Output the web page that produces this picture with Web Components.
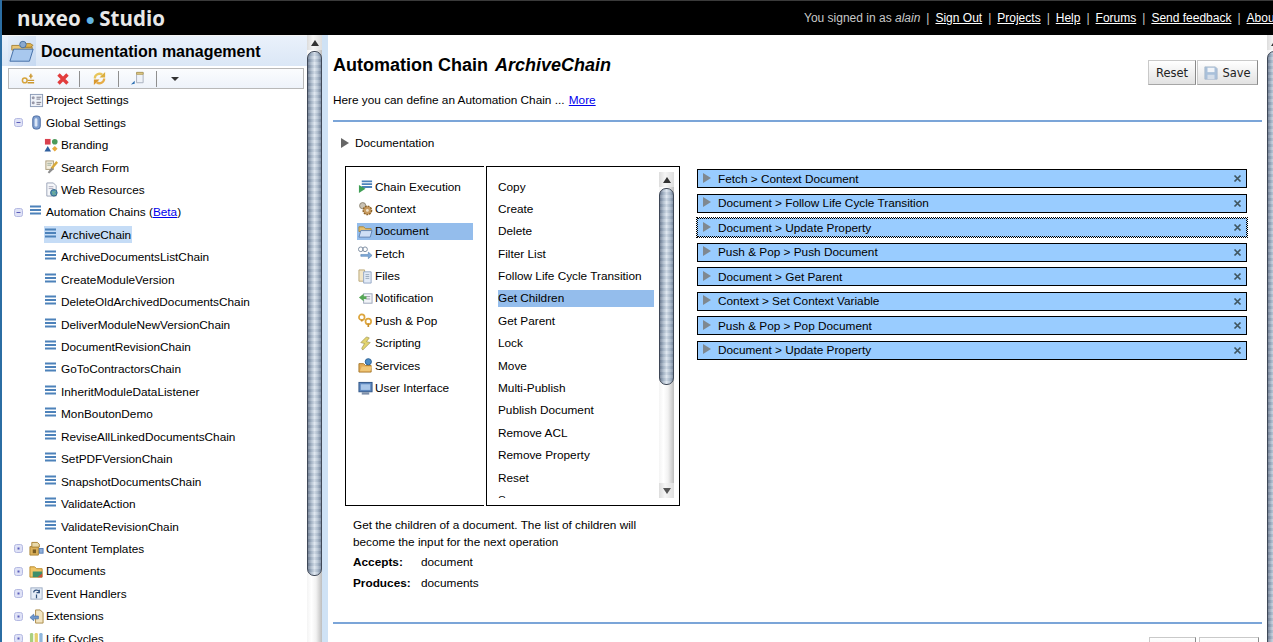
<!DOCTYPE html>
<html>
<head>
<meta charset="utf-8">
<title>Nuxeo Studio</title>
<style>
  html, body { margin: 0; height: 642px; overflow: hidden; background: #fff; }
  body { font: 11.8px "Liberation Sans", Arial, sans-serif; color: #000; }
  a { color: #0000ee; }
</style>
</head>
<body>
<studio-app>
  <studio-topbar slot="top"></studio-topbar>
  <studio-sidebar slot="side">
    <tree-row icon="settings">Project Settings</tree-row>
    <tree-row icon="cylinder" toggle="minus">Global Settings</tree-row>
    <tree-row level="1" icon="shapes">Branding</tree-row>
    <tree-row level="1" icon="search">Search Form</tree-row>
    <tree-row level="1" icon="webres">Web Resources</tree-row>
    <tree-row icon="lines" toggle="minus">Automation Chains (<a href="#">Beta</a>)</tree-row>
    <tree-row level="1" icon="lines" selected>ArchiveChain</tree-row>
    <tree-row level="1" icon="lines">ArchiveDocumentsListChain</tree-row>
    <tree-row level="1" icon="lines">CreateModuleVersion</tree-row>
    <tree-row level="1" icon="lines">DeleteOldArchivedDocumentsChain</tree-row>
    <tree-row level="1" icon="lines">DeliverModuleNewVersionChain</tree-row>
    <tree-row level="1" icon="lines">DocumentRevisionChain</tree-row>
    <tree-row level="1" icon="lines">GoToContractorsChain</tree-row>
    <tree-row level="1" icon="lines">InheritModuleDataListener</tree-row>
    <tree-row level="1" icon="lines">MonBoutonDemo</tree-row>
    <tree-row level="1" icon="lines">ReviseAllLinkedDocumentsChain</tree-row>
    <tree-row level="1" icon="lines">SetPDFVersionChain</tree-row>
    <tree-row level="1" icon="lines">SnapshotDocumentsChain</tree-row>
    <tree-row level="1" icon="lines">ValidateAction</tree-row>
    <tree-row level="1" icon="lines">ValidateRevisionChain</tree-row>
    <tree-row icon="templates" toggle="plus">Content Templates</tree-row>
    <tree-row icon="documents" toggle="plus">Documents</tree-row>
    <tree-row icon="events" toggle="plus">Event Handlers</tree-row>
    <tree-row icon="extensions" toggle="plus">Extensions</tree-row>
    <tree-row icon="cycles" toggle="plus">Life Cycles</tree-row>
  </studio-sidebar>
  <chain-editor slot="main">
    <palette-item slot="categories" icon="execution">Chain Execution</palette-item>
    <palette-item slot="categories" icon="gears">Context</palette-item>
    <palette-item slot="categories" icon="folder" selected>Document</palette-item>
    <palette-item slot="categories" icon="fetch">Fetch</palette-item>
    <palette-item slot="categories" icon="files">Files</palette-item>
    <palette-item slot="categories" icon="notify">Notification</palette-item>
    <palette-item slot="categories" icon="pushpop">Push &amp; Pop</palette-item>
    <palette-item slot="categories" icon="script">Scripting</palette-item>
    <palette-item slot="categories" icon="services">Services</palette-item>
    <palette-item slot="categories" icon="monitor">User Interface</palette-item>

    <palette-item slot="operations">Copy</palette-item>
    <palette-item slot="operations">Create</palette-item>
    <palette-item slot="operations">Delete</palette-item>
    <palette-item slot="operations">Filter List</palette-item>
    <palette-item slot="operations">Follow Life Cycle Transition</palette-item>
    <palette-item slot="operations" selected>Get Children</palette-item>
    <palette-item slot="operations">Get Parent</palette-item>
    <palette-item slot="operations">Lock</palette-item>
    <palette-item slot="operations">Move</palette-item>
    <palette-item slot="operations">Multi-Publish</palette-item>
    <palette-item slot="operations">Publish Document</palette-item>
    <palette-item slot="operations">Remove ACL</palette-item>
    <palette-item slot="operations">Remove Property</palette-item>
    <palette-item slot="operations">Reset</palette-item>
    <palette-item slot="operations">Save</palette-item>

    <chain-step slot="steps">Fetch &gt; Context Document</chain-step>
    <chain-step slot="steps">Document &gt; Follow Life Cycle Transition</chain-step>
    <chain-step slot="steps" focused>Document &gt; Update Property</chain-step>
    <chain-step slot="steps">Push &amp; Pop &gt; Push Document</chain-step>
    <chain-step slot="steps">Document &gt; Get Parent</chain-step>
    <chain-step slot="steps">Context &gt; Set Context Variable</chain-step>
    <chain-step slot="steps">Push &amp; Pop &gt; Pop Document</chain-step>
    <chain-step slot="steps">Document &gt; Update Property</chain-step>
  </chain-editor>
</studio-app>

<script>
const ICONS = {
  settings: '<rect x="1.5" y="1.5" width="13" height="13" fill="#eef2f8" stroke="#8a9ab5"/><circle cx="4.5" cy="5" r="1.6" fill="#99a"/><circle cx="4.5" cy="10.5" r="1.6" fill="#99a"/><path d="M8 4.5h5M8 6.5h4M8 10h5M8 12h4" stroke="#778" fill="none"/>',
  cylinder: '<rect x="4" y="1" width="8" height="14" rx="3" fill="#7f9fd0" stroke="#47699f"/><rect x="6" y="3.5" width="3" height="9" rx="1.5" fill="#dbe6f6"/>',
  shapes: '<rect x="1" y="1" width="6" height="6" fill="#d9414e"/><circle cx="11.5" cy="4" r="3" fill="#4c9a5a"/><path d="M4 8.5l3.5 6h-7z" fill="#2f5f9f"/><path d="M11.5 8.5l3 3-3 3-3-3z" fill="#e8a93c"/>',
  search: '<rect x="2" y="1" width="8" height="9" fill="#f5efe0" stroke="#a89a78"/><path d="M3.5 3.5h5M3.5 5.5h4" stroke="#9a9"/><path d="M14 2L8 9" stroke="#d8a93a" stroke-width="2.5"/><path d="M8 8l-4 5 1.5 1.5L10 10z" fill="#8d8d8d"/>',
  webres: '<path d="M3 1h7l3 3v11H3z" fill="#f6f7fa" stroke="#9aa4b8"/><path d="M5 5h5M5 7h5" stroke="#aab"/><circle cx="10.5" cy="11.5" r="3.5" fill="#4d90b8" stroke="#2e6285"/><path d="M8.500 10.500c2 1 3 0 4-1M9 13c1.500-.5 3-.5 4 .5" stroke="#8fc87a" fill="none"/>',
  lines: '<path d="M1 1.500h11M1 5h11M1 8.500h11" stroke="#4d82ba" stroke-width="2" fill="none"/>',
  templates: '<path d="M1 6h9v9H1z" fill="#dcb25c" stroke="#a98233"/><path d="M3 1.500h6l2 2v3H3z" fill="#e9d9a9" stroke="#a98233"/><rect x="11" y="8" width="4" height="5" fill="#8fb0dc" stroke="#5a7fb5"/><rect x="4" y="9" width="3.500" height="4" fill="#7a5c22"/>',
  documents: '<path d="M1 3h5l2 2h6v9H1z" fill="#f1c667" stroke="#b98a2c"/><rect x="4" y="8" width="10" height="6" fill="#3e8f6a"/><path d="M9 14l5-4v4z" fill="#d24d3a"/>',
  events: '<rect x="2" y="2" width="12" height="12" fill="#e6edf7" stroke="#9aaac2"/><path d="M5 7c0-3 5-3.500 6-.5M11 4v3H8M8 9v4" stroke="#33527d" stroke-width="1.300" fill="none"/>',
  extensions: '<path d="M7 1h5l3 3v11H7z" fill="#f2e4c1" stroke="#a98a48"/><path d="M1 9l4-3.500v2h5v3H5v2z" fill="#6f97cc" stroke="#416da6" stroke-width=".7"/>',
  cycles: '<rect x="1" y="2" width="3.500" height="11" rx="1.500" fill="#a9cf7f"/><rect x="6" y="2" width="3.500" height="11" rx="1.500" fill="#e6cf6c"/><rect x="11" y="2" width="3.500" height="11" rx="1.500" fill="#8fb6dc"/>',
  execution: '<path d="M4 2.500h11M4 5.500h11M4 8.500h11" stroke="#4d82ba" stroke-width="2" fill="none"/><path d="M1 6.500l7 4-7 4.500z" fill="#3f9f55"/>',
  gears: '<circle cx="5" cy="5" r="3.300" fill="#c9c2b4" stroke="#8c8372"/><circle cx="10" cy="10" r="4.500" fill="#c89a5f" stroke="#8c6328" stroke-width="1.500" stroke-dasharray="2 1"/><circle cx="10" cy="10" r="1.500" fill="#f1e3c8"/>',
  folder: '<path d="M1 3h5l2 2h6v3H1z" fill="#e6c070" stroke="#a8853a"/><path d="M1 14l2-7h12l-2 7z" fill="#cfdff5" stroke="#5f82b2"/>',
  fetch: '<circle cx="3" cy="3.500" r="2.500" fill="none" stroke="#7a8a9f"/><circle cx="7.500" cy="3.500" r="2.500" fill="none" stroke="#7a8a9f"/><path d="M3 9h8V6.500l4 3.500-4 3.500V11H3z" fill="#7fa9d8" stroke="#4f7cae" stroke-width=".6"/>',
  files: '<path d="M1 1h6v12H1z" fill="#f2e6c8" stroke="#b9a675"/><path d="M6 3h8v12H6z" fill="#e3ebf7" stroke="#93a6c4"/><path d="M8 6h4M8 8h4M8 10h4" stroke="#9ab"/>',
  notify: '<rect x="6" y="3" width="9" height="10" fill="#f2f4f8" stroke="#9aa4b8"/><path d="M8 6h5M8 8.500h5" stroke="#99a"/><path d="M1 7l5-4v2.500h3v3H6V11z" fill="#55a755"/>',
  pushpop: '<circle cx="4" cy="4.500" r="3" fill="none" stroke="#dda53c" stroke-width="1.800"/><circle cx="11" cy="9" r="3" fill="none" stroke="#dda53c" stroke-width="1.800"/><path d="M11 11v4M4 7v2" stroke="#c78d2a" stroke-width="1.800"/>',
  script: '<path d="M9 1L3 7l4 1-3 5 1 2 8-8-4-1 3-4z" fill="#e3d46d" stroke="#a39a59" stroke-width=".8"/>',
  services: '<path d="M1 6h5l2 2h6v7H1z" fill="#e3aa55" stroke="#a67a2d"/><circle cx="11" cy="4" r="3.300" fill="#4d8cc4" stroke="#2a5f92"/><path d="M2 14l2-5h11l-2 5z" fill="#f0c777"/>',
  monitor: '<rect x="1" y="1.500" width="14" height="10" fill="#5e88bf" stroke="#2e5486"/><rect x="3" y="3.500" width="10" height="6" fill="#a9c6e8"/><rect x="4" y="12" width="8" height="2.500" fill="#7d8ea8"/>',
  openfolder: '<path d="M3 8h8l2 2h12v3H3z" fill="#e9c678" stroke="#a88335"/><path d="M1 25l4-13h21l-4 13z" fill="#a8c8ee" stroke="#3f6aa3"/><path d="M15 6h8l3 2-3 2h-8z" fill="#e0b24c" stroke="#a88335"/><circle cx="15" cy="7" r="3.500" fill="#8aa9cf" stroke="#48709f"/>',
  linkadd: '<circle cx="4" cy="10" r="2.500" fill="none" stroke="#d6a43c" stroke-width="1.600"/><path d="M7 10h7M7 12.500h7M10.500 3v5M8.500 5.500h4" stroke="#cc982f" stroke-width="1.500"/>',
  redx: '<path d="M2.500 2.500l9 9M11.500 2.500l-9 9" stroke="#e23d3d" stroke-width="3.400"/>',
  refresh: '<path d="M3 8a5 5 0 0 1 8-4" stroke="#e8c65c" stroke-width="2.400" fill="none"/><path d="M14 1v6H8z" fill="#dcae3e"/><path d="M13 8a5 5 0 0 1-8 4" stroke="#e6ad48" stroke-width="2.400" fill="none"/><path d="M2 15V9h6z" fill="#d9982f"/>',
  page: '<path d="M7 1.500h7v11H7z" fill="#eef2f8" stroke="#a7afbd"/><path d="M7 1.500h7v2H7z" fill="#e4cf8c" stroke="#b39d5c"/><path d="M1 14.500l4-1v-3z" fill="#2c6fb3"/>',
  save: '<path d="M1 1h12l2 2v12H1z" fill="#a9c0da" stroke="#a8b9cd"/><rect x="4" y="2" width="8" height="5" fill="#f1f4f8"/><rect x="4" y="10" width="8" height="5" fill="#d5dee9"/>'
};

function iconSvg(name, size) {
  const box = name === 'openfolder' ? 28 : name === 'lines' ? 14 : name === 'redx' ? 14 : 16;
  return `<svg width="${size}" height="${size}" viewBox="0 0 ${box} ${box}" style="display:block;flex:none">${ICONS[name] || ''}</svg>`;
}

class StudioApp extends HTMLElement {
  constructor() {
    super();
    this.attachShadow({ mode: 'open' });
    this.shadowRoot.innerHTML = `
      <style>
        :host {
          display: flex;
          flex-direction: column;
          height: 642px;
          border-left: 2px solid #2b6da3;
          box-sizing: border-box;
          overflow: hidden;
        }
        .body { flex: 1; display: flex; min-height: 0; }
        .strip { width: 6px; flex: none; background: #cfe2f5; }
      </style>
      <slot name="top"></slot>
      <div class="body">
        <slot name="side"></slot>
        <aqua-scrollbar open-end></aqua-scrollbar>
        <div class="strip"></div>
        <slot name="main"></slot>
      </div>
    `;
  }
}

class StudioTopbar extends HTMLElement {
  constructor() {
    super();
    this.attachShadow({ mode: 'open' });
    this.shadowRoot.innerHTML = `
      <style>
        :host {
          display: flex;
          align-items: center;
          flex: none;
          height: 35px;
          box-sizing: border-box;
          border-top: 1px solid #3a3a3a;
          background: #000;
          color: #c8c8c8;
          overflow: hidden;
          white-space: nowrap;
        }
        .logo {
          flex: none;
          width: 802px;
          box-sizing: border-box;
          padding-left: 15px;
          font: 700 20.5px "Open Sans", sans-serif;
          color: #e8e8e8;
        }
        .logo i { color: #62b4e2; font-style: normal; font-size: 16px; margin: 0 4px 0 5px; vertical-align: 1px; }
        .links { flex: none; display: flex; gap: 6px; font-size: 12px; }
        a { color: #fff; }
      </style>
      <div class="logo">nuxeo<i>&#9679;</i>Studio</div>
      <div class="links">
        <span>You signed in as <em>alain</em></span><span>|</span>
        <a href="#">Sign Out</a><span>|</span>
        <a href="#">Projects</a><span>|</span>
        <a href="#">Help</a><span>|</span>
        <a href="#">Forums</a><span>|</span>
        <a href="#">Send feedback</a><span>|</span>
        <a href="#">About</a>
      </div>
    `;
  }
}

class StudioSidebar extends HTMLElement {
  constructor() {
    super();
    this.attachShadow({ mode: 'open' });
    this.shadowRoot.innerHTML = `
      <style>
        :host {
          display: flex;
          flex-direction: column;
          flex: none;
          width: 305px;
          min-height: 0;
          background: #fff;
          overflow: hidden;
        }
        .head {
          flex: none;
          height: 31px;
          display: flex;
          align-items: stretch;
          box-sizing: border-box;
          border-top: 1px solid #f4f4f4;
          background: linear-gradient(#eaf1fb, #dbe7f6);
        }
        .glyph {
          width: 28px;
          margin-left: 6px;
          display: flex;
          align-items: center;
          justify-content: center;
          background: linear-gradient(135deg, #e4edf9, #c6d9f1);
        }
        h1 { margin: 0 0 0 5px; font-size: 16px; line-height: 31px; font-weight: bold; color: #000; }
        .tools {
          flex: none;
          height: 21px;
          margin: 2px 3px 0 6px;
          box-sizing: border-box;
          border: 1px solid #b9b9b9;
          display: flex;
          align-items: center;
          background: linear-gradient(#fbfcfe, #eef3fa);
        }
        .tool { flex: none; display: flex; justify-content: center; align-items: center; }
        .sep { flex: none; width: 1px; height: 16px; background: #8f8f8f; }
        .caret { width: 0; height: 0; border: 4px solid transparent; border-top: 4px solid #333; border-bottom: 0; margin: 1px auto 0; }
        .tree { flex: 1; min-height: 0; overflow: hidden; }
      </style>
      <div class="head">
        <div class="glyph">${iconSvg('openfolder', 26)}</div>
        <h1>Documentation management</h1>
      </div>
      <div class="tools">
        <span class="tool" style="width:38px">${iconSvg('linkadd', 15)}</span>
        <span class="tool" style="width:32px">${iconSvg('redx', 14)}</span>
        <span class="sep"></span>
        <span class="tool" style="width:38px">${iconSvg('refresh', 15)}</span>
        <span class="sep"></span>
        <span class="tool" style="width:37px">${iconSvg('page', 15)}</span>
        <span class="sep"></span>
        <span class="tool" style="width:35px"><span class="caret"></span></span>
      </div>
      <div class="tree"><slot></slot></div>
    `;
  }
}

class TreeRow extends HTMLElement {
  connectedCallback() {
    if (this.shadowRoot) return;
    this.attachShadow({ mode: 'open' });
    const level = this.getAttribute('level') === '1' ? 1 : 0;
    const toggle = this.getAttribute('toggle');
    const mark = toggle === 'minus' ? '<path d="M2.500 4.500h4" stroke="#5a5cb8"/>'
      : toggle === 'plus' ? '<rect x="3.500" y="3.500" width="2" height="2" fill="#5a5cb8"/>' : '';
    this.shadowRoot.innerHTML = `
      <style>
        :host {
          display: flex;
          align-items: center;
          height: 22.450px;
          padding-left: ${level ? 42 : 12}px;
          white-space: nowrap;
        }
        .toggle { flex: none; width: 15px; height: 9px; }
        .inner { display: flex; align-items: center; height: 17px; }
        :host([selected]) .inner { background: #c5dcf6; padding-right: 1px; }
        .icon { flex: none; width: 17px; }
      </style>
      ${level ? '' : `<svg class="toggle" viewBox="0 0 15 9"><rect x=".5" y=".5" width="8" height="8" rx="2" fill="${toggle ? '#dfe2f6' : 'none'}" stroke="${toggle ? '#b4b9e2' : 'none'}"/>${mark}</svg>`}
      <div class="inner">
        <span class="icon">${iconSvg(this.getAttribute('icon'), this.getAttribute('icon') === 'lines' ? 14 : 15)}</span>
        <span><slot></slot></span>
      </div>
    `;
  }
}

class AquaScrollbar extends HTMLElement {
  connectedCallback() {
    if (this.shadowRoot) return;
    this.attachShadow({ mode: 'open' });
    const open = this.hasAttribute('open-end');
    const h = this.getAttribute('thumb-height');
    this.shadowRoot.innerHTML = `
      <style>
        :host {
          display: flex;
          flex-direction: column;
          flex: none;
          width: 15px;
          background: linear-gradient(90deg, #f4f4f4, #ffffff 30%, #f2f2f2 60%, #bdbdbd);
          overflow: hidden;
        }
        .arrow {
          flex: none;
          height: 15px;
          display: flex;
          align-items: center;
          justify-content: center;
          background: linear-gradient(90deg, #dcdcdc, #f6f6f6 40%, #dedede);
        }
        .up { width: 0; height: 0; border: 4px solid transparent; border-top: 0; border-bottom: 6px solid #333; }
        .down { width: 0; height: 0; border: 4px solid transparent; border-bottom: 0; border-top: 6px solid #555; }
        .thumb {
          flex: none;
          box-sizing: border-box;
          height: ${h || 525}px;
          margin-top: 1px;
          border-radius: 7px;
          border: 1px solid #3f4857;
          background:
            repeating-linear-gradient(0deg, rgba(255,255,255,.12) 0 3px, rgba(90,110,135,.1) 3px 6px),
            linear-gradient(90deg, #6f7d92, #a9b8c9 25%, #dbe4ee 50%, #b3c1d1 75%, #7a8aa0);
        }
        .rest { flex: 1; }
      </style>
      <div class="arrow"><span class="up"></span></div>
      <div class="thumb"></div>
      <div class="rest"></div>
      ${open ? '' : '<div class="arrow"><span class="down"></span></div>'}
    `;
  }
}

class PaletteItem extends HTMLElement {
  connectedCallback() {
    if (this.shadowRoot) return;
    this.attachShadow({ mode: 'open' });
    const icon = this.getAttribute('icon');
    this.shadowRoot.innerHTML = `
      <style>
        :host { display: block; height: 22.400px; white-space: nowrap; }
        .inner { display: flex; align-items: center; height: 17px; position: relative; top: 2px; }
        :host([selected]) .inner { background: #94bdec; }
        .icon { flex: none; width: 18px; padding-left: 1px; box-sizing: border-box; }
      </style>
      <div class="inner">
        ${icon ? `<span class="icon">${iconSvg(icon, 15)}</span>` : ''}
        <span><slot></slot></span>
      </div>
    `;
  }
}

class ChainStep extends HTMLElement {
  connectedCallback() {
    if (this.shadowRoot) return;
    this.attachShadow({ mode: 'open' });
    this.shadowRoot.innerHTML = `
      <style>
        :host {
          display: flex;
          align-items: center;
          height: 19px;
          box-sizing: border-box;
          border: 1px solid #000;
          background: #99ccff;
          padding: 0 4px 0 5px;
          margin-bottom: 5.500px;
        }
        :host([focused]) { border-style: dotted; outline: 1px dotted #000; }
        .tri { flex: none; width: 0; height: 0; border-left: 8px solid #7f8890; border-top: 5px solid transparent; border-bottom: 5px solid transparent; margin: -2px 7px 0 0; }
        .text { flex: 1; white-space: nowrap; }
        svg { flex: none; }
      </style>
      <span class="tri"></span>
      <span class="text"><slot></slot></span>
      <svg width="9" height="9" viewBox="0 0 9 9"><path d="M1.500 1.500l6 6M7.500 1.500l-6 6" stroke="#3f5560" stroke-width="1.700"/></svg>
    `;
  }
}

class FormButton extends HTMLElement {
  connectedCallback() {
    if (this.shadowRoot) return;
    this.attachShadow({ mode: 'open' });
    const icon = this.getAttribute('icon');
    this.shadowRoot.innerHTML = `
      <style>
        :host {
          display: inline-flex;
          align-items: center;
          justify-content: center;
          gap: 4px;
          height: 25px;
          box-sizing: border-box;
          border: 1px solid #c9c9c9;
          border-right-color: #8a8a8a;
          border-bottom-color: #a6a6a6;
          background: linear-gradient(#ffffff, #e2e2e2);
          font: 11.5px "DejaVu Sans", sans-serif;
          color: #222;
        }
      </style>
      ${icon ? iconSvg(icon, 14) : ''}<slot></slot>
    `;
  }
}

class ChainEditor extends HTMLElement {
  constructor() {
    super();
    this.attachShadow({ mode: 'open' });
    this.shadowRoot.innerHTML = `
      <style>
        :host { flex: 1; min-width: 0; display: flex; background: #fff; overflow: hidden; }
        .page { flex: 1; min-width: 0; padding: 0 5px 0 5px; }
        .clip { flex: none; width: 6px; overflow: hidden; display: flex; }
        .head { display: flex; justify-content: space-between; }
        h2 { margin: 18px 0 0; font-size: 18px; line-height: 24px; font-weight: bold; color: #000; }
        h2 em { padding-left: 2px; }
        .btns { display: flex; gap: 1px; margin: 25px 4px 0 0; }
        .intro { margin: 7px 0 0; line-height: 16px; }
        .intro a { color: #0000ee; margin-left: 1px; }
        hr { border: 0; height: 2px; background: #7ba5d8; margin: 12px 0 0; }
        .doc { display: flex; align-items: center; height: 16px; margin: 13px 0 0 8px; }
        .doc span { width: 0; height: 0; border-left: 8px solid #666; border-top: 5px solid transparent; border-bottom: 5px solid transparent; margin-right: 6px; }
        .work { display: flex; margin: 15px 0 0 12px; align-items: flex-start; }
        .cats {
          flex: none; width: 139px; height: 340px; box-sizing: border-box;
          border: solid #000; border-width: 1px 0 1px 1px;
          padding: 9px 11px 0 11px;
        }
        .ops {
          flex: none; width: 194px; height: 340px; box-sizing: border-box;
          border: 1px solid #000; margin-left: 2px;
          display: flex; padding: 5px 5px 7px 11px;
        }
        .oplist { width: 156px; flex: none; overflow: hidden; padding-top: 4px; height: 322px; margin-right: 5px; }
        .ops aqua-scrollbar { height: 326px; }
        .steps { flex: none; width: 550px; margin: 3px 0 0 17px; }
        .desc { margin: 11px 0 0 20px; width: 300px; line-height: 17px; }
        .desc p { margin: 0; }
        dl { margin: 3px 0 0; display: grid; grid-template-columns: 68px auto; row-gap: 4px; }
        dt { font-weight: bold; }
        dd { margin: 0; }
        .second { margin-top: 30px; }
        .btns.bottom { margin: 13px 3px 0 0; gap: 3px; }
      </style>
      <div class="page">
        <div class="head">
          <h2>Automation Chain <em>ArchiveChain</em></h2>
          <div class="btns">
            <form-button style="width:48px">Reset</form-button>
            <form-button icon="save" style="width:61px">Save</form-button>
          </div>
        </div>
        <p class="intro">Here you can define an Automation Chain ... <a href="#">More</a></p>
        <hr>
        <div class="doc"><span></span>Documentation</div>
        <div class="work">
          <div class="cats"><slot name="categories"></slot></div>
          <div class="ops">
            <div class="oplist"><slot name="operations"></slot></div>
            <aqua-scrollbar thumb-height="197"></aqua-scrollbar>
          </div>
          <div class="steps"><slot name="steps"></slot></div>
        </div>
        <div class="desc">
          <p>Get the children of a document. The list of children will become the input for the next operation</p>
          <dl>
            <dt>Accepts:</dt><dd>document</dd>
            <dt>Produces:</dt><dd>documents</dd>
          </dl>
        </div>
        <hr class="second">
        <div class="head" style="justify-content:flex-end">
          <div class="btns bottom">
            <form-button style="width:47px">Reset</form-button>
            <form-button icon="save" style="width:60px">Save</form-button>
          </div>
        </div>
      </div>
      <div class="clip"><aqua-scrollbar thumb-height="700" open-end></aqua-scrollbar></div>
    `;
  }
}

customElements.define('aqua-scrollbar', AquaScrollbar);
customElements.define('form-button', FormButton);
customElements.define('tree-row', TreeRow);
customElements.define('palette-item', PaletteItem);
customElements.define('chain-step', ChainStep);
customElements.define('studio-topbar', StudioTopbar);
customElements.define('studio-sidebar', StudioSidebar);
customElements.define('chain-editor', ChainEditor);
customElements.define('studio-app', StudioApp);
</script>
</body>
</html>
